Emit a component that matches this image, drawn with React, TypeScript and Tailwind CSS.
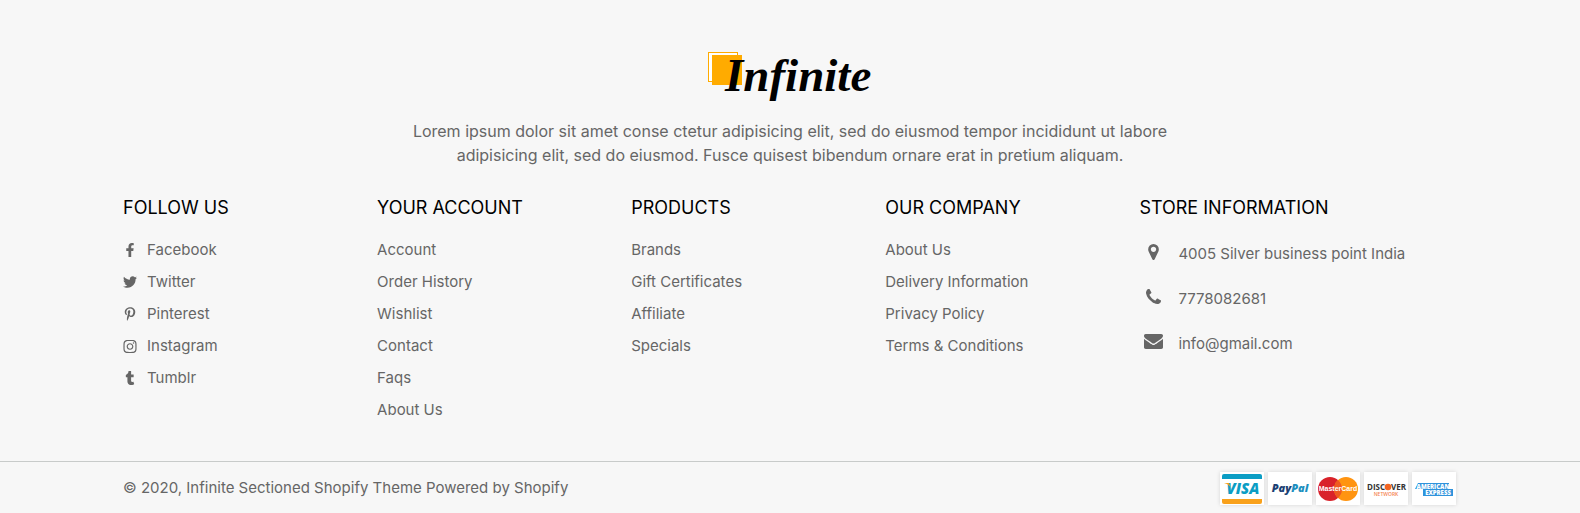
import type { ReactNode } from "react";
import { FaFacebookF, FaInstagram, FaPinterestP, FaTumblr, FaTwitter } from "react-icons/fa";

const social = [
  { label: "Facebook", icon: <FaFacebookF size={14} /> },
  { label: "Twitter", icon: <FaTwitter size={14} /> },
  { label: "Pinterest", icon: <FaPinterestP size={14} /> },
  { label: "Instagram", icon: <FaInstagram size={15} /> },
  { label: "Tumblr", icon: <FaTumblr size={14} /> },
];

const menus = [
  { title: "YOUR ACCOUNT", links: ["Account", "Order History", "Wishlist", "Contact", "Faqs", "About Us"] },
  { title: "PRODUCTS", links: ["Brands", "Gift Certificates", "Affiliate", "Specials"] },
  { title: "OUR COMPANY", links: ["About Us", "Delivery Information", "Privacy Policy", "Terms & Conditions"] },
];

const pin = (
  <svg width="11" height="16" viewBox="0 0 1024 1536" fill="currentColor" aria-hidden="true">
    <path d="M768 512q0-106-75-181t-181-75-181 75-75 181 75 181 181 75 181-75 75-181zm256 0q0 109-33 179l-364 774q-16 33-47.5 52t-67.5 19-67.5-19-46.5-52l-365-774q-33-70-33-179 0-212 150-362t362-150 362 150 150 362z" />
  </svg>
);

const phone = (
  <svg width="15" height="15" viewBox="0 128 1408 1408" fill="currentColor" aria-hidden="true">
    <path d="M1408 1240q0 27-10 70.5t-21 68.5q-21 50-122 106-94 51-186 51-27 0-53-3.5t-57-12.5-47-14.5-55.5-20.5-49.5-18q-98-35-175-83-127-79-264-216t-216-264q-48-77-83-175-3-9-18-49.5t-20.5-55.5-14.5-47-12.5-57-3.5-53q0-92 51-186 56-101 106-122 25-11 68.5-21t70.5-10q14 0 21 3 18 6 53 76 11 19 30 54t35 63.5 31 53.5q3 4 17.5 25t21.5 35.5 7 28.5q0 20-28.5 50t-62 55-62 53-28.5 46q0 9 5 22.5t8.5 20.5 14 24 11.5 19q76 137 174 235t235 174q2 1 19 11.5t24 14 20.5 8.5 22.5 5q18 0 46-28.5t53-62 55-62 50-28.5q14 0 28.5 7t35.5 21.5 25 17.5q25 15 53.5 31t63.5 35 54 30q70 35 76 53 3 7 3 21z" />
  </svg>
);

const envelope = (
  <svg width="19" height="15" viewBox="0 256 1792 1408" fill="currentColor" aria-hidden="true">
    <path d="M1792 710v794q0 66-47 113t-113 47h-1472q-66 0-113-47t-47-113v-794q44 49 101 87 362 246 497 345 57 42 92.5 65.5t94.5 48 110 24.5h2q51 0 110-24.5t94.5-48 92.5-65.5q170-123 498-345 57-39 100-87zm0-294q0 79-49 151t-122 123q-376 261-468 325-10 7-42.5 31t-54 38.5-52 32.5-57.5 27-50 9h-2q-23 0-50-9t-57.5-27-52-32.5-54-38.5-42.5-31q-91-64-262-182.5t-205-142.5q-62-42-117-115.5t-55-136.5q0-78 41.5-130t118.5-52h1472q65 0 112.5 47t47.5 113z" />
  </svg>
);

const store = [
  { text: "4005 Silver business point India", icon: pin },
  { text: "7778082681", icon: phone },
  { text: "info@gmail.com", icon: envelope },
];

function Heading({ children }: { children: ReactNode }) {
  return <h2 className="text-lg leading-7 whitespace-nowrap text-black">{children}</h2>;
}

function Logo() {
  return (
    <a href="#" aria-label="Infinite">
      <svg width="168" height="51" viewBox="0 0 168 51" className="overflow-visible">
        <rect x="2.5" y="4.5" width="29" height="29" fill="#fff" stroke="#ffab00" />
        <rect x="6" y="7" width="30" height="30" fill="#ffab00" />
        <text x="19" y="43" fontFamily="'Liberation Serif', serif" fontStyle="italic" fontWeight="700" fontSize="47" fill="#000">
          Infinite
        </text>
      </svg>
    </a>
  );
}

function Card({ label, children }: { label: string; children: ReactNode }) {
  return (
    <li className="bg-white shadow-[0_0_4px_rgba(0,0,0,0.14)]">
      <svg width="44" height="33" viewBox="0 0 44 33" role="img" aria-label={label} fontFamily="'Open Sans', sans-serif" fontWeight="800">
        {children}
      </svg>
    </li>
  );
}

function Payments() {
  return (
    <ul className="flex gap-1 pr-px">
      <Card label="Visa">
        <path d="M2 7V4q0-2 2-2h36q2 0 2 2v3z" fill="#0b9dc4" />
        <path d="M2 27h40v3q0 2-2 2H4q-2 0-2-2z" fill="#f9a11b" />
        <text x="23" y="22" textAnchor="middle" fontSize="15" fontStyle="italic" fill="#0b9dc4">VISA</text>
        <path d="M4 11h5l2 5q-2-4-7-5z" fill="#f9a11b" />
      </Card>
      <Card label="PayPal">
        <text x="22" y="20" textAnchor="middle" fontSize="11" fontStyle="italic" fill="#1b3f73">
          Pay<tspan fill="#1c8fc0">Pal</tspan>
        </text>
      </Card>
      <Card label="MasterCard">
        <circle cx="14" cy="17" r="12" fill="#d9222a" />
        <circle cx="30" cy="17" r="12" fill="#ff9410" />
        <path d="M22 8.1a12 12 0 0 1 0 17.8 12 12 0 0 1 0-17.8z" fill="#ee5a20" />
        <text x="22" y="19" textAnchor="middle" fontSize="7" fontWeight="700" fontFamily="'Liberation Sans', sans-serif" fill="#fff">MasterCard</text>
      </Card>
      <Card label="Discover Network">
        <text x="3" y="18" fontSize="8" fontWeight="700" fill="#333">DISC</text>
        <circle cx="24" cy="15" r="3.3" fill="#f26522" />
        <text x="27" y="18" fontSize="8" fontWeight="700" fill="#333">VER</text>
        <text x="22" y="24" textAnchor="middle" fontSize="5" fontWeight="600" fill="#f58555">NETWORK</text>
      </Card>
      <Card label="American Express">
        <path d="M6 11h31v6h4v7H11v-7H3z" fill="#2f93dc" />
        <text x="21" y="17" textAnchor="middle" fontSize="6" fill="#fff">AMERICAN</text>
        <text x="26" y="23" textAnchor="middle" fontSize="6" fill="#fff">EXPRESS</text>
      </Card>
    </ul>
  );
}

export default function App() {
  return (
    <footer className="bg-[#f7f7f7] font-['Inter',sans-serif] text-[15px] text-[#666]">
      <div className="mx-auto max-w-[1334px] pt-12 pb-[35px]">
        <div className="flex flex-col items-center">
          <Logo />
          <p className="mt-5 text-center text-base leading-6">
            Lorem ipsum dolor sit amet conse ctetur adipisicing elit, sed do eiusmod tempor incididunt ut labore{" "}
            <br />
            adipisicing elit, sed do eiusmod. Fusce quisest bibendum ornare erat in pretium aliquam.
          </p>
        </div>
        <div className="mt-[27px] grid grid-cols-[4fr_4fr_4fr_4fr_5fr]">
          <section>
            <Heading>FOLLOW US</Heading>
            <ul className="mt-3">
              {social.map((item) => (
                <li key={item.label}>
                  <a href="#" className="flex items-center gap-2.5 leading-8">
                    <span className="flex w-3.5 justify-center">{item.icon}</span>
                    {item.label}
                  </a>
                </li>
              ))}
            </ul>
          </section>
          {menus.map((menu) => (
            <section key={menu.title}>
              <Heading>{menu.title}</Heading>
              <ul className="mt-3">
                {menu.links.map((link) => (
                  <li key={link} className="leading-8">
                    <a href="#">{link}</a>
                  </li>
                ))}
              </ul>
            </section>
          ))}
          <section>
            <Heading>STORE INFORMATION</Heading>
            <ul className="mt-[9px]">
              {store.map((item) => (
                <li key={item.text} className="flex items-center gap-2.5 leading-[45px]">
                  <span className="flex w-[29px] justify-center pb-1">{item.icon}</span>
                  {item.text}
                </li>
              ))}
            </ul>
          </section>
        </div>
      </div>
      <div className="border-t border-[#c8cbca]">
        <div className="mx-auto flex h-[51px] max-w-[1334px] items-center justify-between pt-0.5">
          <p>© 2020, Infinite Sectioned Shopify Theme Powered by Shopify</p>
          <Payments />
        </div>
      </div>
    </footer>
  );
}
